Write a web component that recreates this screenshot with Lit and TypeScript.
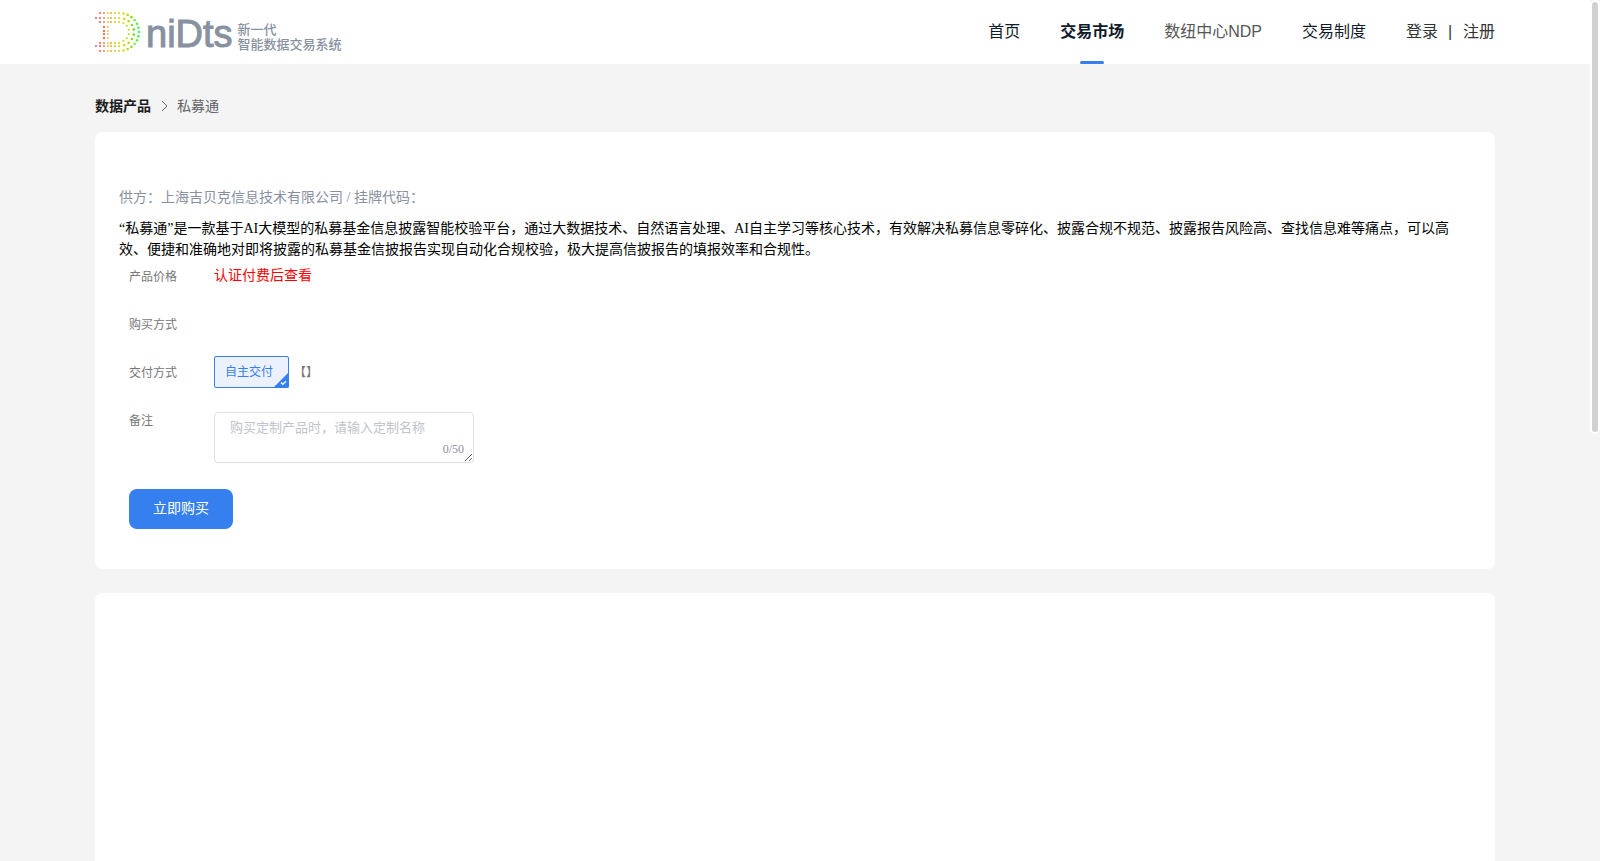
import { LitElement, html, css, svg } from "lit";
import { customElement, state } from "lit/decorators.js";

// Dots of the "D" mark, coloured from pink on the left through yellow to green on the right.
const dots: Array<{ x: number; y: number; r: number; c: string }> = [];
const stops: Array<[number, number]> = [[0, -15], [5, 2], [9, 20], [13, 42], [20, 52], [28, 60], [36, 78], [41, 110], [45, 140]];
const ramp = (x: number): string => {
  let i = 1;
  while (i < stops.length - 1 && stops[i][0] < x) i++;
  const [x0, h0] = stops[i - 1];
  const [x1, h1] = stops[i];
  const hue = h0 + ((Math.min(x, x1) - x0) / (x1 - x0)) * (h1 - h0);
  const light = hue > 45 && hue < 100 ? 48 : 62;
  return `hsl(${Math.round(hue)} 80% ${light}%)`;
};
const rows: Array<[number, number[]]> = [
  [1, [5, 9, 13, 16, 20, 24]],
  [6, [1, 5, 9, 13, 16, 20, 24]],
  [10, [5, 9, 13, 16, 20, 24]],
  [31, [5, 9, 13, 16, 20, 24]],
  [34, [1, 5, 9, 13, 16, 20, 24]],
  [39, [5, 9, 13, 16, 20, 24]],
];
for (const [y, xs] of rows) for (const x of xs) dots.push({ x, y, r: 1, c: ramp(x) });
for (const y of [15, 19, 22, 26]) {
  dots.push({ x: 9, y, r: 1.2, c: ramp(8) });
  dots.push({ x: 13, y, r: 0.9, c: ramp(13) });
}
const arcs: Array<[number, number, number, number]> = [
  [10, 10, 7, 1.1],
  [15, 14, 9, 1.3],
  [20, 19, 14, 1.3],
];
for (const [rx, ry, n, r] of arcs) {
  for (let i = 1; i < n; i++) {
    const a = -Math.PI / 2 + (i / n) * Math.PI;
    const x = 24 + rx * Math.cos(a);
    dots.push({ x, y: 20 + ry * Math.sin(a), r, c: ramp(x) });
  }
}

@customElement("site-logo")
export class SiteLogo extends LitElement {
  static styles = css`
    :host { display: block; color: #87919f; }
    .logo { display: flex; align-items: center; color: inherit; text-decoration: none; }
    .mark { width: 46px; height: 40px; flex: none; }
    .name {
      margin: 0 5px; padding-top: 4px; font: 38px/40px "Liberation Sans", sans-serif;
      -webkit-text-stroke: 1px #87919f;
    }
    .tag { padding-top: 8px; font: 500 13px/15px "Noto Sans CJK SC", sans-serif; white-space: nowrap; }
    .line { display: block; }
  `;
  render() {
    return html`<a class="logo" href="#">
      <svg class="mark" viewBox="0 0 46 40" aria-hidden="true">
        ${dots.map((d) => svg`<circle cx=${d.x} cy=${d.y} r=${d.r} fill=${d.c}></circle>`)}
      </svg>
      <span class="name">niDts</span>
      <span class="tag"><span class="line">新一代</span><span class="line">智能数据交易系统</span></span>
    </a>`;
  }
}

@customElement("site-header")
export class SiteHeader extends LitElement {
  static styles = css`
    :host { display: block; background: #fff; }
    .bar {
      max-width: 1400px; height: 64px; margin: 0 auto; display: flex;
      align-items: center; justify-content: space-between;
    }
    .nav { display: flex; gap: 40px; font: 16px/64px "Liberation Sans", "Noto Sans CJK SC", sans-serif; }
    .link { height: 64px; color: #0f1a2a; text-decoration: none; }
    .muted { color: #555; }
    .active { position: relative; font-weight: 700; }
    .active::after {
      content: ""; position: absolute; left: 50%; bottom: 0; width: 24px; height: 3px;
      margin-left: -12px; border-radius: 2px; background: #367fee;
    }
    .account { display: flex; gap: 10px; color: #333; }
    .account .link { color: #333; }
    .bar-mark { width: 5px; }
  `;
  render() {
    return html`<header class="bar">
      <site-logo></site-logo>
      <nav class="nav">
        <a class="link" href="#">首页</a>
        <a class="link active" href="#">交易市场</a>
        <a class="link muted" href="#">数纽中心NDP</a>
        <a class="link" href="#">交易制度</a>
        <span class="account"><a class="link" href="#">登录</a><span class="bar-mark">|</span><a class="link" href="#">注册</a></span>
      </nav>
    </header>`;
  }
}

@customElement("purchase-form")
export class PurchaseForm extends LitElement {
  @state() private note = "";
  static styles = css`
    :host { display: block; padding: 0 10px; font-size: 12px; color: #777; }
    .row { display: grid; grid-template-columns: 85px 1fr; height: 32px; margin-bottom: 16px; line-height: 34px; }
    .row.tall { height: auto; }
    .price { font-size: 14px; line-height: 32px; color: #f00; }
    .options { display: flex; gap: 5px; }
    .option {
      position: relative; box-sizing: border-box; width: 75px; height: 32px; padding: 0 0 0 10px;
      border: 1px solid #367fee; border-radius: 2px; background: #ebf2fd; color: #367fee;
      font: inherit; line-height: 30px; text-align: left;
    }
    .tick { position: absolute; right: -1px; bottom: -1px; width: 16px; height: 16px; }
    .note { position: relative; width: 260px; height: 51px; margin-top: 8px; }
    .text {
      display: block; box-sizing: border-box; width: 100%; height: 100%; padding: 5px 15px;
      border: 1px solid #dcdfe6; border-radius: 4px; outline: none; resize: both; overflow: hidden;
      font: 13px/20px "Liberation Serif", "Noto Sans CJK SC", serif; color: #606266;
    }
    .text::placeholder { color: #c0c4cc; }
    .count { position: absolute; right: 10px; bottom: 7px; line-height: 14px; color: #909399; pointer-events: none; }
    .buy {
      display: block; width: 104px; height: 40px; margin-top: 26px; padding: 0 0 2px; border: 0;
      border-radius: 8px; background: #367fee; color: #fff; font: inherit; font-size: 14px;
    }
  `;
  render() {
    return html`
      <div class="row"><span>产品价格</span><span class="price">认证付费后查看</span></div>
      <div class="row"><span>购买方式</span></div>
      <div class="row">
        <span>交付方式</span>
        <div class="options">
          <button class="option" type="button" aria-pressed="true">自主交付
            <svg class="tick" viewBox="0 0 16 16" aria-hidden="true">
              <path d="M16 0V14Q16 16 14 16H0Z" fill="#367fee"></path>
              <path d="M8 10.5l1.8 1.8L13 9.2" fill="none" stroke="#fff" stroke-width="1.3"></path>
            </svg>
          </button>
          <span>【】</span>
        </div>
      </div>
      <div class="row tall">
        <label for="note">备注</label>
        <div class="note">
          <textarea id="note" class="text" maxlength="50" placeholder="购买定制产品时，请输入定制名称"
            .value=${this.note}
            @input=${(e: Event) => (this.note = (e.target as HTMLTextAreaElement).value)}></textarea>
          <span class="count">${this.note.length}/50</span>
        </div>
      </div>
      <button class="buy" type="button">立即购买</button>
    `;
  }
}

@customElement("app-root")
export class AppRoot extends LitElement {
  static styles = css`
    :host {
      display: block; position: relative; box-sizing: border-box; height: 100vh; overflow: hidden;
      padding-right: 10px; background: #f4f4f4; color: #000;
      font: 14px/21px "Liberation Serif", "Noto Sans CJK SC", serif;
    }
    .page { max-width: 1400px; margin: 0 auto; }
    .crumbs { display: flex; align-items: center; height: 20px; padding: 32px 0 16px; color: #606266; }
    .home { color: #1b1b1b; font-weight: 700; text-decoration: none; }
    .chevron { width: 14px; height: 14px; margin: 0 6px; }
    .card { padding: 24px; border-radius: 8px; background: #fff; }
    .product { padding: 55px 24px 40px; margin-bottom: 24px; }
    .supplier { margin: 0 0 10px; color: #87919f; }
    .intro { margin: 0; }
    .detail { min-height: 400px; }
    .thumb {
      position: absolute; top: 0; right: 0; width: 6px; height: 430px; border: 2px solid #fff;
      border-radius: 5px; background: #d1d1d1;
    }
  `;
  render() {
    return html`
      <site-header></site-header>
      <main class="page">
        <nav class="crumbs">
          <a class="home" href="#">数据产品</a>
          <svg class="chevron" viewBox="0 0 14 14" aria-hidden="true">
            <path d="M5 2l5 5-5 5" fill="none" stroke="#606266" stroke-width="1"></path>
          </svg>
          <span>私募通</span>
        </nav>
        <section class="card product">
          <p class="supplier">供方：上海吉贝克信息技术有限公司 / 挂牌代码：</p>
          <p class="intro">“私募通”是一款基于AI大模型的私募基金信息披露智能校验平台，通过大数据技术、自然语言处理、AI自主学习等核心技术，有效解决私募信息零碎化、披露合规不规范、披露报告风险高、查找信息难等痛点，可以高效、便捷和准确地对即将披露的私募基金信披报告实现自动化合规校验，极大提高信披报告的填报效率和合规性。</p>
          <purchase-form></purchase-form>
        </section>
        <section class="card detail"></section>
      </main>
      <div class="thumb"></div>
    `;
  }
}
